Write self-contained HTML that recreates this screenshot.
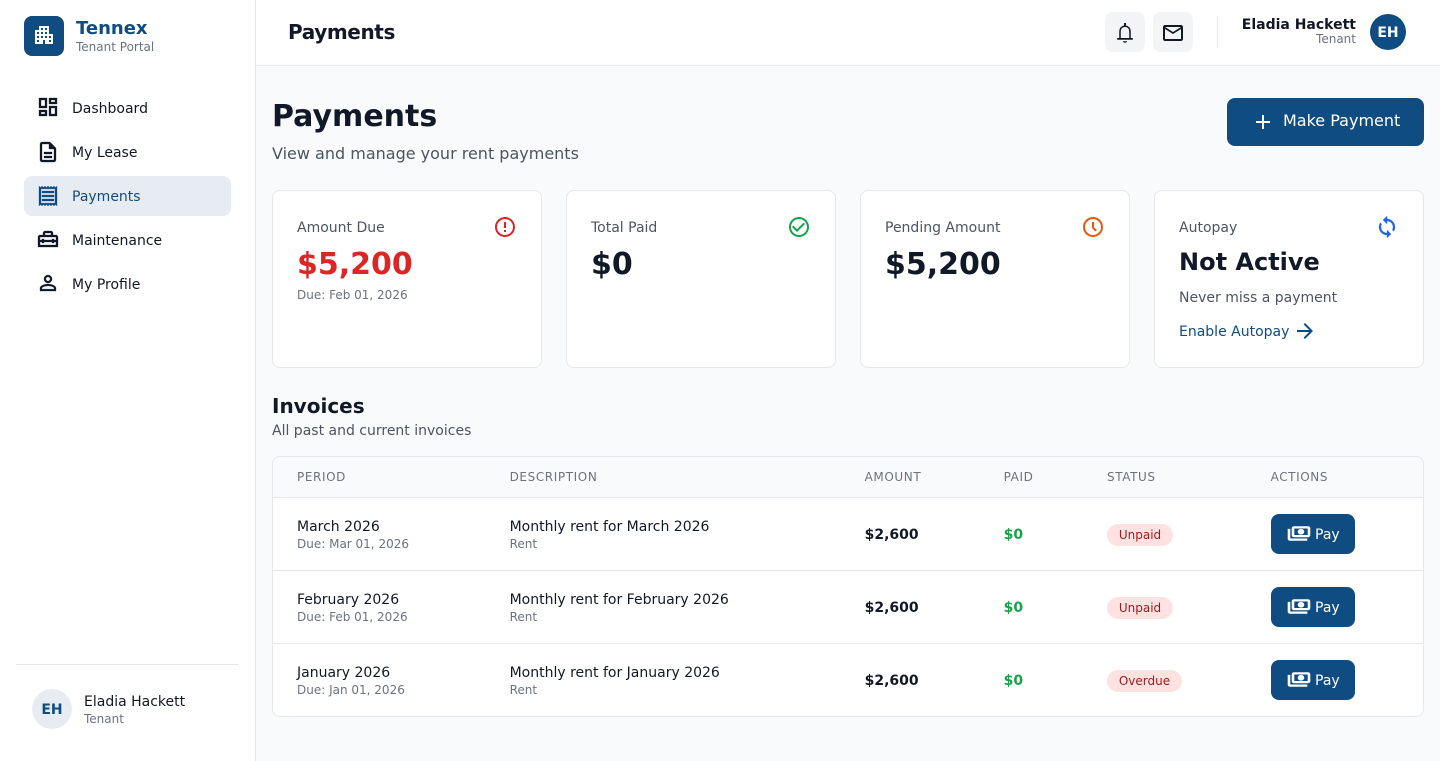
<!DOCTYPE html>
<html lang="en"><head><meta charset="utf-8"><title>Payments</title>
<style>
*{box-sizing:border-box;margin:0;padding:0}
html,body{width:1440px;height:761px;overflow:hidden;background:#f9fafb;font-family:"DejaVu Sans",sans-serif;color:#111827}
.a{position:absolute;white-space:nowrap}
.t{position:absolute;white-space:nowrap;line-height:20px}
svg{position:absolute;fill:currentColor;stroke:currentColor;stroke-width:.3px}
svg.n{stroke:none}
svg.p{stroke-width:.6px;left:16px;top:9px;transform:scaleX(-1)}
.card{position:absolute;top:190px;width:270px;height:178px;background:#fff;border:1px solid #e5e7eb;border-radius:8px}
.nav{font-size:14px;color:#111827}
.th{font-size:12px;color:#6b7280;letter-spacing:.6px}
.m{font-size:14px;color:#111827}
.s{font-size:12px;color:#6b7280}
.b{font-size:14px;font-weight:700}
.g{font-size:14px;font-weight:700;color:#16a34a}
.badge{position:absolute;height:22px;line-height:22px;border-radius:11px;background:#fee2e2;color:#991b1b;font-size:12px;text-align:center}
.pay{position:absolute;left:1271px;width:84px;height:40px;border-radius:8px;background:#0f4c81;color:#fff}
.line{position:absolute;background:#e5e7eb}
</style></head><body>
<!-- sidebar -->
<div class="a" style="left:0;top:0;width:256px;height:761px;background:#fff;border-right:1px solid #e5e7eb"></div>
<div class="a" style="left:24px;top:16px;width:40px;height:40px;border-radius:8px;background:#0f4c81"></div>
<svg class="n" style="left:32px;top:23px;color:#fff" width="24" height="24" viewBox="0 0 24 24"><path d="M17 11V3H7v4H3v14h8v-4h2v4h8V11h-4zM7 19H5v-2h2v2zm0-4H5v-2h2v2zm0-4H5V9h2v2zm4 4H9v-2h2v2zm0-4H9V9h2v2zm0-4H9V5h2v2zm4 8h-2v-2h2v2zm0-4h-2V9h2v2zm0-4h-2V5h2v2zm4 12h-2v-2h2v2zm0-4h-2v-2h2v2z"/></svg>
<div class="t" style="left:76px;top:19px;font-size:18px;font-weight:700;color:#0f4c81">Tennex</div>
<div class="t" style="left:76px;top:37px;font-size:12px;color:#6b7280">Tenant Portal</div>

<div class="a" style="left:24px;top:176px;width:207px;height:40px;border-radius:8px;background:#e7ecf3"></div>
<svg style="left:36px;top:95px" width="24" height="24" viewBox="0 0 24 24"><path d="M19 5v2h-4V5h4M9 5v6H5V5h4m10 8v6h-4v-6h4M9 17v2H5v-2h4M21 3h-8v6h8V3zM11 3H3v10h8V3zm10 8h-8v10h8V11zm-10 4H3v6h8v-6z"/></svg>
<svg style="left:36px;top:140px" width="24" height="24" viewBox="0 0 24 24"><path d="M8 16h8v2H8zm0-4h8v2H8zm6-10H6c-1.1 0-2 .9-2 2v16c0 1.1.89 2 1.99 2H18c1.1 0 2-.9 2-2V8l-6-6zm4 18H6V4h7v5h5v11z"/></svg>
<svg style="left:36px;top:184px;color:#0f4c81" width="24" height="24" viewBox="0 0 24 24"><path d="M19.5 3.5 18 2l-1.5 1.5L15 2l-1.5 1.5L12 2l-1.5 1.5L9 2 7.5 3.5 6 2 4.5 3.5 3 2v20l1.5-1.5L6 22l1.5-1.5L9 22l1.5-1.5L12 22l1.5-1.5L15 22l1.5-1.5L18 22l1.5-1.5L21 22V2l-1.5 1.5zM19 19.09H5V4.91h14v14.18zM6 15h12v2H6zm0-4h12v2H6zm0-4h12v2H6z"/></svg>
<svg style="left:36px;top:227px" width="24" height="24" viewBox="0 0 24 24"><path d="M20 8h-3V6c0-1.1-.9-2-2-2H9c-1.1 0-2 .9-2 2v2H4c-1.1 0-2 .9-2 2v10h20V10c0-1.1-.9-2-2-2zM9 6h6v2H9V6zm11 12H4v-3h2v1h2v-1h8v1h2v-1h2v3zm-2-5v-1h-2v1H8v-1H6v1H4v-3h16v3h-2z"/></svg>
<svg style="left:36px;top:271px" width="24" height="24" viewBox="0 0 24 24"><path d="M12 5.9c1.16 0 2.1.94 2.1 2.1s-.94 2.1-2.1 2.1S9.9 9.16 9.9 8s.94-2.1 2.1-2.1m0 9c2.97 0 6.1 1.46 6.1 2.1v1.1H5.9V17c0-.64 3.13-2.1 6.1-2.1M12 4C9.79 4 8 5.79 8 8s1.79 4 4 4 4-1.79 4-4-1.79-4-4-4zm0 9c-2.67 0-8 1.34-8 4v3h16v-3c0-2.66-5.33-4-8-4z"/></svg>
<div class="t nav" style="left:72px;top:99px">Dashboard</div>
<div class="t nav" style="left:72px;top:143px">My Lease</div>
<div class="t nav" style="left:72px;top:187px;color:#0f4c81">Payments</div>
<div class="t nav" style="left:72px;top:231px">Maintenance</div>
<div class="t nav" style="left:72px;top:275px">My Profile</div>

<div class="line" style="left:16px;top:664px;width:223px;height:1px"></div>
<div class="a" style="left:32px;top:689px;width:40px;height:40px;border-radius:50%;background:#e7ecf3"></div>
<div class="a" style="left:32px;top:690px;width:40px;height:40px;color:#0f4c81;font-size:14px;font-weight:700;line-height:40px;text-align:center">EH</div>
<div class="t m" style="left:84px;top:692px">Eladia Hackett</div>
<div class="t s" style="left:84px;top:709px">Tenant</div>

<!-- topbar -->
<div class="a" style="left:256px;top:0;width:1184px;height:66px;background:#fff;border-bottom:1px solid #e5e7eb"></div>
<div class="t" style="left:288px;top:22px;font-size:20px;letter-spacing:-.4px;font-weight:700">Payments</div>
<div class="a" style="left:1105px;top:12px;width:40px;height:40px;border-radius:8px;background:#f3f4f6"></div>
<div class="a" style="left:1153px;top:12px;width:40px;height:40px;border-radius:8px;background:#f3f4f6"></div>
<svg class="n" style="left:1113px;top:21px" width="24" height="24" viewBox="0 0 24 24"><path fill="none" stroke="#111827" stroke-width="1.5" d="M7 17.5V10.5C7 7.3 9 5.2 12 5.2S17 7.3 17 10.5V17.5"/><path d="M4.2 17h15.6v1.7H4.2zM11 2h2v3h-2zM10 20.2h4c0 .9-.9 1.5-2 1.5s-2-.6-2-1.5z"/></svg>
<svg class="n" style="left:1161px;top:20.5px" width="24" height="24" viewBox="0 0 24 24"><path d="M20 4H4c-1.1 0-1.99.9-1.99 2L2 18c0 1.1.9 2 2 2h16c1.1 0 2-.9 2-2V6c0-1.1-.9-2-2-2zm0 14H4V8l8 5 8-5v10zm-8-7L4 6h16l-8 5z"/></svg>
<div class="line" style="left:1217px;top:16px;width:1px;height:32px"></div>
<div class="t" style="right:84px;top:15px;font-size:14px;font-weight:700">Eladia Hackett</div>
<div class="t s" style="right:84px;top:29px">Tenant</div>
<div class="a" style="left:1370px;top:14px;width:36px;height:36px;border-radius:50%;background:#0f4c81"></div>
<div class="a" style="left:1370px;top:15px;width:36px;height:36px;color:#fff;font-size:14px;font-weight:700;line-height:36px;text-align:center">EH</div>

<!-- heading -->
<div class="t" style="left:272px;top:99px;font-size:30px;line-height:36px;font-weight:700">Payments</div>
<div class="t" style="left:272px;top:144px;font-size:16px;color:#4b5563">View and manage your rent payments</div>
<div class="a" style="left:1227px;top:98px;width:197px;height:48px;border-radius:8px;background:#0f4c81"></div>
<svg class="n" style="left:1251px;top:109.5px;color:#fff" width="24" height="24" viewBox="0 0 24 24"><path d="M19 13h-6v6h-2v-6H5v-2h6V5h2v6h6v2z"/></svg>
<div class="t" style="left:1283px;top:111px;font-size:16px;color:#fff">Make Payment</div>

<!-- cards -->
<div class="card" style="left:272px"></div>
<div class="card" style="left:566px"></div>
<div class="card" style="left:860px"></div>
<div class="card" style="left:1154px"></div>

<div class="t" style="left:297px;top:218px;font-size:14px;color:#4b5563">Amount Due</div>
<svg class="n" style="left:493px;top:214.5px;color:#dc2626" width="24" height="24" viewBox="0 0 24 24"><path d="M11 15h2v2h-2zm0-8h2v6h-2zm.99-5C6.47 2 2 6.48 2 12s4.47 10 9.99 10C17.52 22 22 17.52 22 12S17.52 2 11.99 2zM12 20c-4.42 0-8-3.58-8-8s3.58-8 8-8 8 3.58 8 8-3.58 8-8 8z"/></svg>
<div class="t" style="left:297px;top:247px;font-size:30px;line-height:36px;font-weight:700;color:#dc2626">$5,200</div>
<div class="t s" style="left:297px;top:285px">Due: Feb 01, 2026</div>

<div class="t" style="left:591px;top:218px;font-size:14px;color:#4b5563">Total Paid</div>
<svg class="n" style="left:787px;top:214.5px;color:#16a34a" width="24" height="24" viewBox="0 0 24 24"><path d="M16.59 7.58 10 14.17l-3.59-3.58L5 12l5 5 8-8zM12 2C6.48 2 2 6.48 2 12s4.48 10 10 10 10-4.48 10-10S17.52 2 12 2zm0 18c-4.42 0-8-3.58-8-8s3.58-8 8-8 8 3.58 8 8-3.58 8-8 8z"/></svg>
<div class="t" style="left:591px;top:247px;font-size:30px;line-height:36px;font-weight:700">$0</div>

<div class="t" style="left:885px;top:218px;font-size:14px;color:#4b5563">Pending Amount</div>
<svg class="n" style="left:1081px;top:214.5px;color:#ea580c" width="24" height="24" viewBox="0 0 24 24"><path d="M11.99 2C6.47 2 2 6.48 2 12s4.47 10 9.99 10C17.52 22 22 17.52 22 12S17.52 2 11.99 2zM12 20c-4.42 0-8-3.58-8-8s3.58-8 8-8 8 3.58 8 8-3.58 8-8 8z"/><path d="M11 7h2v5.3l2.8 2.8-1.4 1.4L11 13.1z"/></svg>
<div class="t" style="left:885px;top:247px;font-size:30px;line-height:36px;font-weight:700">$5,200</div>

<div class="t" style="left:1179px;top:218px;font-size:14px;color:#4b5563">Autopay</div>
<svg style="left:1375px;top:214.5px;color:#2563eb" width="24" height="24" viewBox="0 0 24 24"><path d="M12 4V1L8 5l4 4V6c3.31 0 6 2.69 6 6 0 1.01-.25 1.97-.7 2.8l1.46 1.46C19.54 15.03 20 13.57 20 12c0-4.42-3.58-8-8-8zm0 14c-3.31 0-6-2.69-6-6 0-1.01.25-1.97.7-2.8L5.24 7.74C4.46 8.97 4 10.43 4 12c0 4.42 3.58 8 8 8v3l4-4-4-4v3z"/></svg>
<div class="t" style="left:1179px;top:248px;font-size:24px;line-height:28px;font-weight:700">Not Active</div>
<div class="t" style="left:1179px;top:288px;font-size:14px;color:#4b5563">Never miss a payment</div>
<div class="t" style="left:1179px;top:322px;font-size:14px;color:#0f4c81">Enable Autopay</div>
<svg class="n" style="left:1293px;top:319px;color:#0f4c81" width="24" height="24" viewBox="0 0 24 24"><path d="M12 4l-1.41 1.41L16.17 11H4v2h12.17l-5.58 5.59L12 20l8-8z"/></svg>

<!-- invoices -->
<div class="t" style="left:272px;top:394px;font-size:20px;line-height:24px;font-weight:700">Invoices</div>
<div class="t" style="left:272px;top:421px;font-size:14px;color:#4b5563">All past and current invoices</div>

<div class="a" style="left:272px;top:456px;width:1152px;height:261px;background:#fff;border:1px solid #e5e7eb;border-radius:8px;overflow:hidden">
  <div class="a" style="left:0;top:0;width:1150px;height:41px;background:#f9fafb;border-bottom:1px solid #e5e7eb"></div>
  <div class="line" style="left:0;top:113px;width:1150px;height:1px"></div>
  <div class="line" style="left:0;top:186px;width:1150px;height:1px"></div>
</div>
<div class="t th" style="left:297px;top:467px">PERIOD</div>
<div class="t th" style="left:509.6px;top:467px">DESCRIPTION</div>
<div class="t th" style="left:864.6px;top:467px">AMOUNT</div>
<div class="t th" style="left:1003.6px;top:467px">PAID</div>
<div class="t th" style="left:1107px;top:467px">STATUS</div>
<div class="t th" style="left:1270.6px;top:467px">ACTIONS</div>

<div class="t m" style="left:297px;top:517px">March 2026</div>
<div class="t s" style="left:297px;top:534px">Due: Mar 01, 2026</div>
<div class="t m" style="left:509.6px;top:517px">Monthly rent for March 2026</div>
<div class="t s" style="left:509.6px;top:534px">Rent</div>
<div class="t b" style="left:864.6px;top:525px">$2,600</div>
<div class="t g" style="left:1003.6px;top:525px">$0</div>
<div class="badge" style="left:1107px;top:524px;width:66px">Unpaid</div>
<div class="pay" style="top:514px"><svg class="p" width="24" height="21" preserveAspectRatio="none" viewBox="0 0 24 24"><path d="M19 14V6c0-1.1-.9-2-2-2H3c-1.1 0-2 .9-2 2v8c0 1.1.9 2 2 2h14c1.1 0 2-.9 2-2zm-2 0H3V6h14v8zm-7-7c-1.66 0-3 1.34-3 3s1.34 3 3 3 3-1.34 3-3-1.34-3-3-3zm13 0v11c0 1.1-.9 2-2 2H4v-2h17V7h2z"/></svg><div class="t" style="left:44px;top:11px;font-size:14px">Pay</div></div>

<div class="t m" style="left:297px;top:590px">February 2026</div>
<div class="t s" style="left:297px;top:607px">Due: Feb 01, 2026</div>
<div class="t m" style="left:509.6px;top:590px">Monthly rent for February 2026</div>
<div class="t s" style="left:509.6px;top:607px">Rent</div>
<div class="t b" style="left:864.6px;top:598px">$2,600</div>
<div class="t g" style="left:1003.6px;top:598px">$0</div>
<div class="badge" style="left:1107px;top:597px;width:66px">Unpaid</div>
<div class="pay" style="top:587px"><svg class="p" width="24" height="21" preserveAspectRatio="none" viewBox="0 0 24 24"><path d="M19 14V6c0-1.1-.9-2-2-2H3c-1.1 0-2 .9-2 2v8c0 1.1.9 2 2 2h14c1.1 0 2-.9 2-2zm-2 0H3V6h14v8zm-7-7c-1.66 0-3 1.34-3 3s1.34 3 3 3 3-1.34 3-3-1.34-3-3-3zm13 0v11c0 1.1-.9 2-2 2H4v-2h17V7h2z"/></svg><div class="t" style="left:44px;top:11px;font-size:14px">Pay</div></div>

<div class="t m" style="left:297px;top:663px">January 2026</div>
<div class="t s" style="left:297px;top:680px">Due: Jan 01, 2026</div>
<div class="t m" style="left:509.6px;top:663px">Monthly rent for January 2026</div>
<div class="t s" style="left:509.6px;top:680px">Rent</div>
<div class="t b" style="left:864.6px;top:671px">$2,600</div>
<div class="t g" style="left:1003.6px;top:671px">$0</div>
<div class="badge" style="left:1107px;top:670px;width:75px">Overdue</div>
<div class="pay" style="top:660px"><svg class="p" width="24" height="21" preserveAspectRatio="none" viewBox="0 0 24 24"><path d="M19 14V6c0-1.1-.9-2-2-2H3c-1.1 0-2 .9-2 2v8c0 1.1.9 2 2 2h14c1.1 0 2-.9 2-2zm-2 0H3V6h14v8zm-7-7c-1.66 0-3 1.34-3 3s1.34 3 3 3 3-1.34 3-3-1.34-3-3-3zm13 0v11c0 1.1-.9 2-2 2H4v-2h17V7h2z"/></svg><div class="t" style="left:44px;top:11px;font-size:14px">Pay</div></div>
</body></html>
